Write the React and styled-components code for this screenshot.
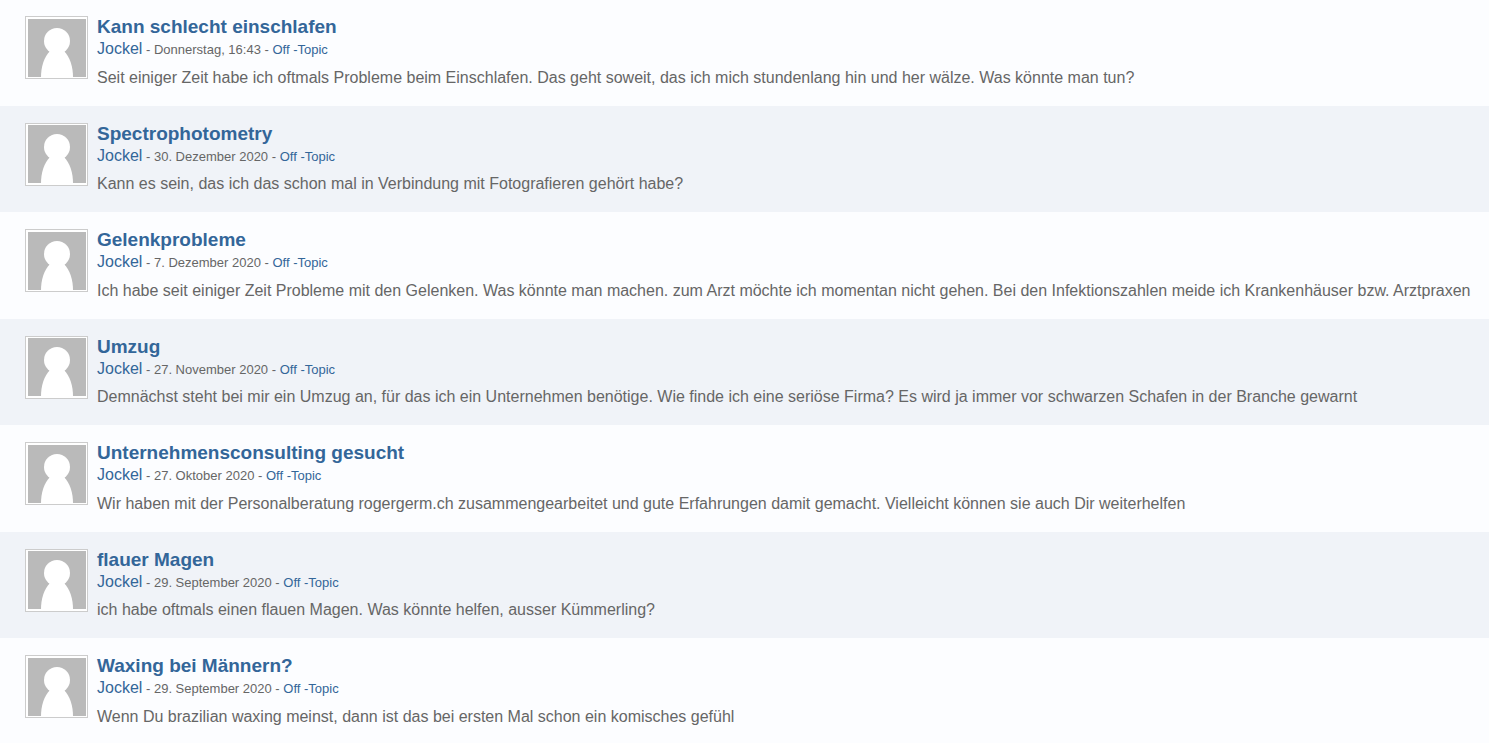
import React from "react";
import styled, { createGlobalStyle } from "styled-components";

const GlobalStyle = createGlobalStyle`
  body {
    margin: 0;
    background: #fcfdff;
    color: #666;
    font-family: "Liberation Sans", Arial, sans-serif;
    font-size: 16px;
  }
`;

const TopicList = styled.ul`
  margin: 0;
  padding: 0;
  list-style: none;
`;

const TopicRow = styled.li`
  display: flex;
  align-items: flex-start;
  gap: 9px;
  padding: 17px 16px 16px 25px;
  background: ${({ $shaded }) => ($shaded ? "#f0f3f8" : "#fcfdff")};

  &:first-child {
    padding-top: 16px;
  }

  &:last-child {
    padding-bottom: 15px;
  }
`;

const AvatarFrame = styled.a`
  display: block;
  flex: none;
  padding: ${({ $shaded }) => ($shaded ? "1px 1px 2px 2px" : "2px 1px 1px 2px")};
  border: 1px solid #ccc;
  background: #fff;

  svg {
    display: block;
  }
`;

const Content = styled.div`
  flex: 1;
  min-width: 0;
`;

const Title = styled.h3`
  margin: 0;
  font-size: 19px;
  line-height: 22px;
`;

const Link = styled.a`
  color: #369;
  text-decoration: none;
`;

const Meta = styled.div`
  font-size: 13px;
  line-height: 22px;
`;

const Author = styled(Link)`
  font-size: 16px;
`;

const Excerpt = styled.p`
  margin: ${({ $shaded }) => ($shaded ? "4px" : "5px")} 0 0;
  font-size: 16px;
  line-height: 24px;
`;

const topics = [
  { title: "Kann schlecht einschlafen", date: "Donnerstag, 16:43", text: "Seit einiger Zeit habe ich oftmals Probleme beim Einschlafen. Das geht soweit, das ich mich stundenlang hin und her wälze. Was könnte man tun?" },
  { title: "Spectrophotometry", date: "30. Dezember 2020", text: "Kann es sein, das ich das schon mal in Verbindung mit Fotografieren gehört habe?" },
  { title: "Gelenkprobleme", date: "7. Dezember 2020", text: "Ich habe seit einiger Zeit Probleme mit den Gelenken. Was könnte man machen. zum Arzt möchte ich momentan nicht gehen. Bei den Infektionszahlen meide ich Krankenhäuser bzw. Arztpraxen" },
  { title: "Umzug", date: "27. November 2020", text: "Demnächst steht bei mir ein Umzug an, für das ich ein Unternehmen benötige. Wie finde ich eine seriöse Firma? Es wird ja immer vor schwarzen Schafen in der Branche gewarnt" },
  { title: "Unternehmensconsulting gesucht", date: "27. Oktober 2020", text: "Wir haben mit der Personalberatung rogergerm.ch zusammengearbeitet und gute Erfahrungen damit gemacht. Vielleicht können sie auch Dir weiterhelfen" },
  { title: "flauer Magen", date: "29. September 2020", text: "ich habe oftmals einen flauen Magen. Was könnte helfen, ausser Kümmerling?" },
  { title: "Waxing bei Männern?", date: "29. September 2020", text: "Wenn Du brazilian waxing meinst, dann ist das bei ersten Mal schon ein komisches gefühl" },
];

function Avatar({ shaded }) {
  return (
    <AvatarFrame href="#" aria-label="Jockel" $shaded={shaded}>
      <svg width="58" height="58" viewBox="0 0 58 58" aria-hidden="true">
        <rect width="58" height="58" fill="#bababa" />
        <circle cx="29" cy="22" r="13" fill="#fff" />
        <path d="M22 32 C16 38 13 48 13 58 H45 C45 48 42 38 36 32 Z" fill="#fff" />
      </svg>
    </AvatarFrame>
  );
}

function Topic({ topic, shaded }) {
  return (
    <TopicRow $shaded={shaded}>
      <Avatar shaded={shaded} />
      <Content>
        <Title><Link href="#">{topic.title}</Link></Title>
        <Meta>
          <Author href="#">Jockel</Author> - {topic.date} - <Link href="#">Off -Topic</Link>
        </Meta>
        <Excerpt $shaded={shaded}>{topic.text}</Excerpt>
      </Content>
    </TopicRow>
  );
}

export default function App() {
  return (
    <>
      <GlobalStyle />
      <TopicList>
        {topics.map((topic, i) => (
          <Topic key={topic.title} topic={topic} shaded={i % 2 === 1} />
        ))}
      </TopicList>
    </>
  );
}
